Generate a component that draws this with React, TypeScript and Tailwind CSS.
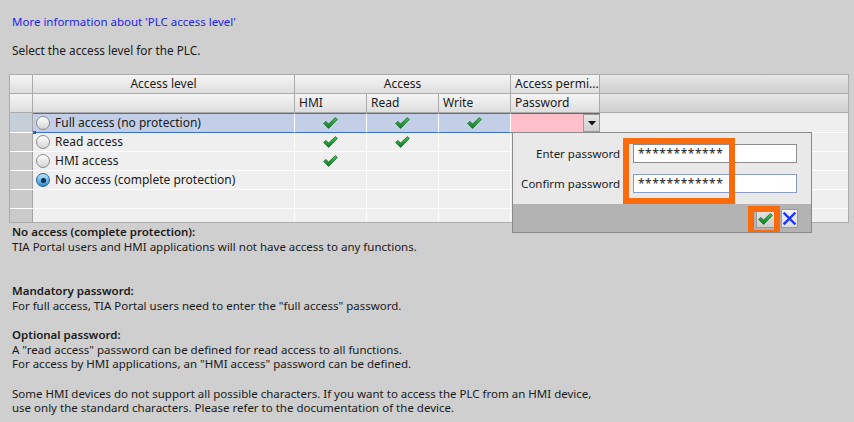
import React from "react";

function Check() {
  return (
    <svg width="15" height="12" viewBox="0 0 15 12">
      <defs>
        <linearGradient id="ck" x1="0" y1="0" x2="0" y2="1">
          <stop offset="0" stopColor="#43c653" />
          <stop offset="1" stopColor="#0b7a23" />
        </linearGradient>
      </defs>
      <path d="M0.6 6.4 L3 4.4 L5.6 7 L12.4 0.6 L14.4 2.4 L5.6 11.4 Z" fill="url(#ck)" stroke="#0b5a1a" strokeWidth="0.7" strokeLinejoin="round" />
    </svg>
  );
}

function Radio({ checked }: { checked?: boolean }) {
  if (checked) {
    return (
      <span className="flex w-[14px] h-[14px] shrink-0 items-center justify-center rounded-full border border-[#2a5f8c] bg-linear-to-b from-[#b4e8ff] to-[#1f8fd3]">
        <span className="w-[5px] h-[5px] rounded-full bg-[#0b2f52]" />
      </span>
    );
  }
  return <span className="w-[14px] h-[14px] shrink-0 rounded-full border border-[#8a8a8a] bg-linear-to-b from-[#ffffff] to-[#d4d4d4]" />;
}

const HDR = "h-full border-r border-b border-[#ababab] bg-linear-to-b from-[#f4f4f4] via-[#eaeaea] to-[#dedede] flex items-center";
const HDRD = "h-full border-b border-[#ababab] bg-linear-to-b from-[#e6e6e6] via-[#dadada] to-[#d0d0d0]";

type Row = { label?: string; hmi?: boolean; read?: boolean; write?: boolean; checked?: boolean; h: string };

export default function App() {
  const rows: Row[] = [
    { label: "Read access", hmi: true, read: true, h: "h-[19px]" },
    { label: "HMI access", hmi: true, h: "h-[19px]" },
    { label: "No access (complete protection)", checked: true, h: "h-[19px]" },
    { h: "h-[19px]" },
    { h: "h-[13px]" },
  ];
  return (
    <div className="relative w-[854px] h-[422px] overflow-hidden bg-[#cfcfcf] text-[12px] text-[#1a1a1a] font-['Noto_Sans','DejaVu_Sans',sans-serif]">
      <div className="pt-[14px] pl-[12px] leading-[16px] text-[11.5px] text-[#2424e8]">More information about 'PLC access level'</div>
      <div className="mt-[12px] pl-[12px] leading-[16px] text-[11.8px]">Select the access level for the PLC.</div>

      <div className="ml-[9px] mt-[16px] w-[840px] border border-[#ababab] bg-[#efefef]">
        <div className="flex h-[19px]">
          <div className={`w-[23px] ${HDR}`} />
          <div className={`w-[262px] justify-center ${HDR}`}>Access level</div>
          <div className={`w-[216px] justify-center ${HDR}`}>Access</div>
          <div className={`w-[89px] pl-[4px] whitespace-nowrap overflow-hidden ${HDR}`}>Access permi...</div>
          <div className={`flex-1 ${HDRD}`} />
        </div>
        <div className="flex h-[19px]">
          <div className={`w-[23px] ${HDR}`} />
          <div className={`w-[262px] ${HDR}`} />
          <div className={`w-[72px] pl-[4px] ${HDR}`}>HMI</div>
          <div className={`w-[72px] pl-[4px] ${HDR}`}>Read</div>
          <div className={`w-[72px] pl-[4px] ${HDR}`}>Write</div>
          <div className={`w-[89px] pl-[4px] ${HDR}`}>Password</div>
          <div className={`flex-1 ${HDRD}`} />
        </div>

        {/* selected row */}
        <div className="relative flex h-[20px]">
          <div className="w-[23px] h-full bg-[#c6ced9] border-r border-b border-r-[#a3a3a3] border-b-white" />
          <div className="w-[262px] h-full bg-[#c3cfe7] border-y border-y-[#3b6fd1] border-r border-r-white flex items-center pl-[3px] gap-[5px]">
            <Radio />
            <span className="whitespace-nowrap">Full access (no protection)</span>
          </div>
          <div className="w-[72px] h-full bg-[#c3cfe7] border-y border-y-[#3b6fd1] border-r border-r-white flex items-center justify-center"><Check /></div>
          <div className="w-[72px] h-full bg-[#c3cfe7] border-y border-y-[#3b6fd1] border-r border-r-white flex items-center justify-center"><Check /></div>
          <div className="w-[72px] h-full bg-[#c3cfe7] border-y border-y-[#3b6fd1] border-r border-r-white flex items-center justify-center"><Check /></div>
          <div className="w-[89px] h-full border-y border-y-[#3b6fd1] flex">
            <div className="flex-1 bg-[#ffc0cb]" />
            <div className="w-[17px] bg-linear-to-b from-[#e6e6e6] to-[#cfcfcf] border border-[#9a9a9a] flex items-center justify-center">
              <svg width="8" height="5" viewBox="0 0 8 5"><path d="M0 0 H8 L4 4.5 Z" fill="#111" /></svg>
            </div>
          </div>
          <div className="flex-1 h-full border-b border-white" />
          <span className="absolute left-[23px] bottom-[-1px] w-[3px] h-[3px] bg-[#2f5fd0]" />
        </div>

        {rows.map((r, i) => (
          <div key={i} className={`flex ${r.h} ${i < rows.length - 1 ? "border-b border-white" : ""}`}>
            <div className="w-[23px] h-full bg-[#cacaca] border-r border-[#a3a3a3]" />
            <div className="w-[262px] h-full border-r border-white flex items-center pl-[3px] gap-[5px]">
              {r.label && <Radio checked={r.checked} />}
              {r.label && <span className="whitespace-nowrap">{r.label}</span>}
            </div>
            <div className="w-[72px] h-full border-r border-white flex items-center justify-center">{r.hmi && <Check />}</div>
            <div className="w-[72px] h-full border-r border-white flex items-center justify-center">{r.read && <Check />}</div>
            <div className="w-[72px] h-full border-r border-white flex items-center justify-center">{r.write && <Check />}</div>
            <div className="w-[89px] h-full border-r border-white" />
            <div className="flex-1 h-full" />
          </div>
        ))}
      </div>

      <div className="mt-[2px] pl-[12px] leading-[14.7px] text-[11.5px] whitespace-nowrap">
        <div className="font-semibold">No access (complete protection):</div>
        <div>TIA Portal users and HMI applications will not have access to any functions.</div>
        <div className="h-[29.4px]" />
        <div className="font-semibold">Mandatory password:</div>
        <div>For full access, TIA Portal users need to enter the "full access" password.</div>
        <div className="h-[14.7px]" />
        <div className="font-semibold">Optional password:</div>
        <div>A "read access" password can be defined for read access to all functions.</div>
        <div>For access by HMI applications, an "HMI access" password can be defined.</div>
        <div className="h-[14.7px]" />
        <div>Some HMI devices do not support all possible characters. If you want to access the PLC from an HMI device,</div>
        <div>use only the standard characters. Please refer to the documentation of the device.</div>
      </div>

      {/* password popup */}
      <div className="absolute left-[512px] top-[132px] w-[300px] h-[101px] border border-[#8a8a8a] flex flex-col bg-[#b3b3b3]">
        <div className="h-[71px] bg-[#e9e9e9] grid grid-cols-[107px_164px] gap-x-[13px] gap-y-[11px] pt-[11px] content-start">
          <div className="h-[19px] flex items-center justify-end whitespace-nowrap text-[11.5px]">Enter password</div>
          <div className="h-[19px] bg-white border border-[#8d8d8d] flex items-center pl-[4px] tracking-[0.5px]">************</div>
          <div className="h-[19px] flex items-center justify-end whitespace-nowrap text-[11.5px]">Confirm password</div>
          <div className="h-[19px] bg-white border border-[#8b9dc6] flex items-center pl-[4px] tracking-[0.5px]">************</div>
        </div>
        <div className="flex-1 flex items-center justify-end pr-[13px] gap-[6px]">
          <div className="w-[19px] h-[18px] mt-[2px] bg-linear-to-b from-[#e4e4e4] to-[#cdcdcd] border border-[#9c9c9c] flex items-center justify-center">
            <Check />
          </div>
          <div className="w-[17px] h-[19px] bg-linear-to-b from-[#f2f2f2] to-[#dcdcdc] border border-[#9c9c9c] flex items-center justify-center">
            <svg width="13" height="13" viewBox="0 0 13 13">
              <path d="M1.5 1.5 L11.5 11.5 M11.5 1.5 L1.5 11.5" stroke="#1c35ff" strokeWidth="2.4" strokeLinecap="square" />
            </svg>
          </div>
        </div>
      </div>

      {/* orange highlights */}
      <div className="absolute left-[623px] top-[138px] w-[112px] h-[66px] border-[6px] border-[#fb6b0c]" />
      <div className="absolute left-[748px] top-[206px] w-[32px] h-[26px] border-[6px] border-b-[2px] border-[#fb6b0c]" />
    </div>
  );
}
